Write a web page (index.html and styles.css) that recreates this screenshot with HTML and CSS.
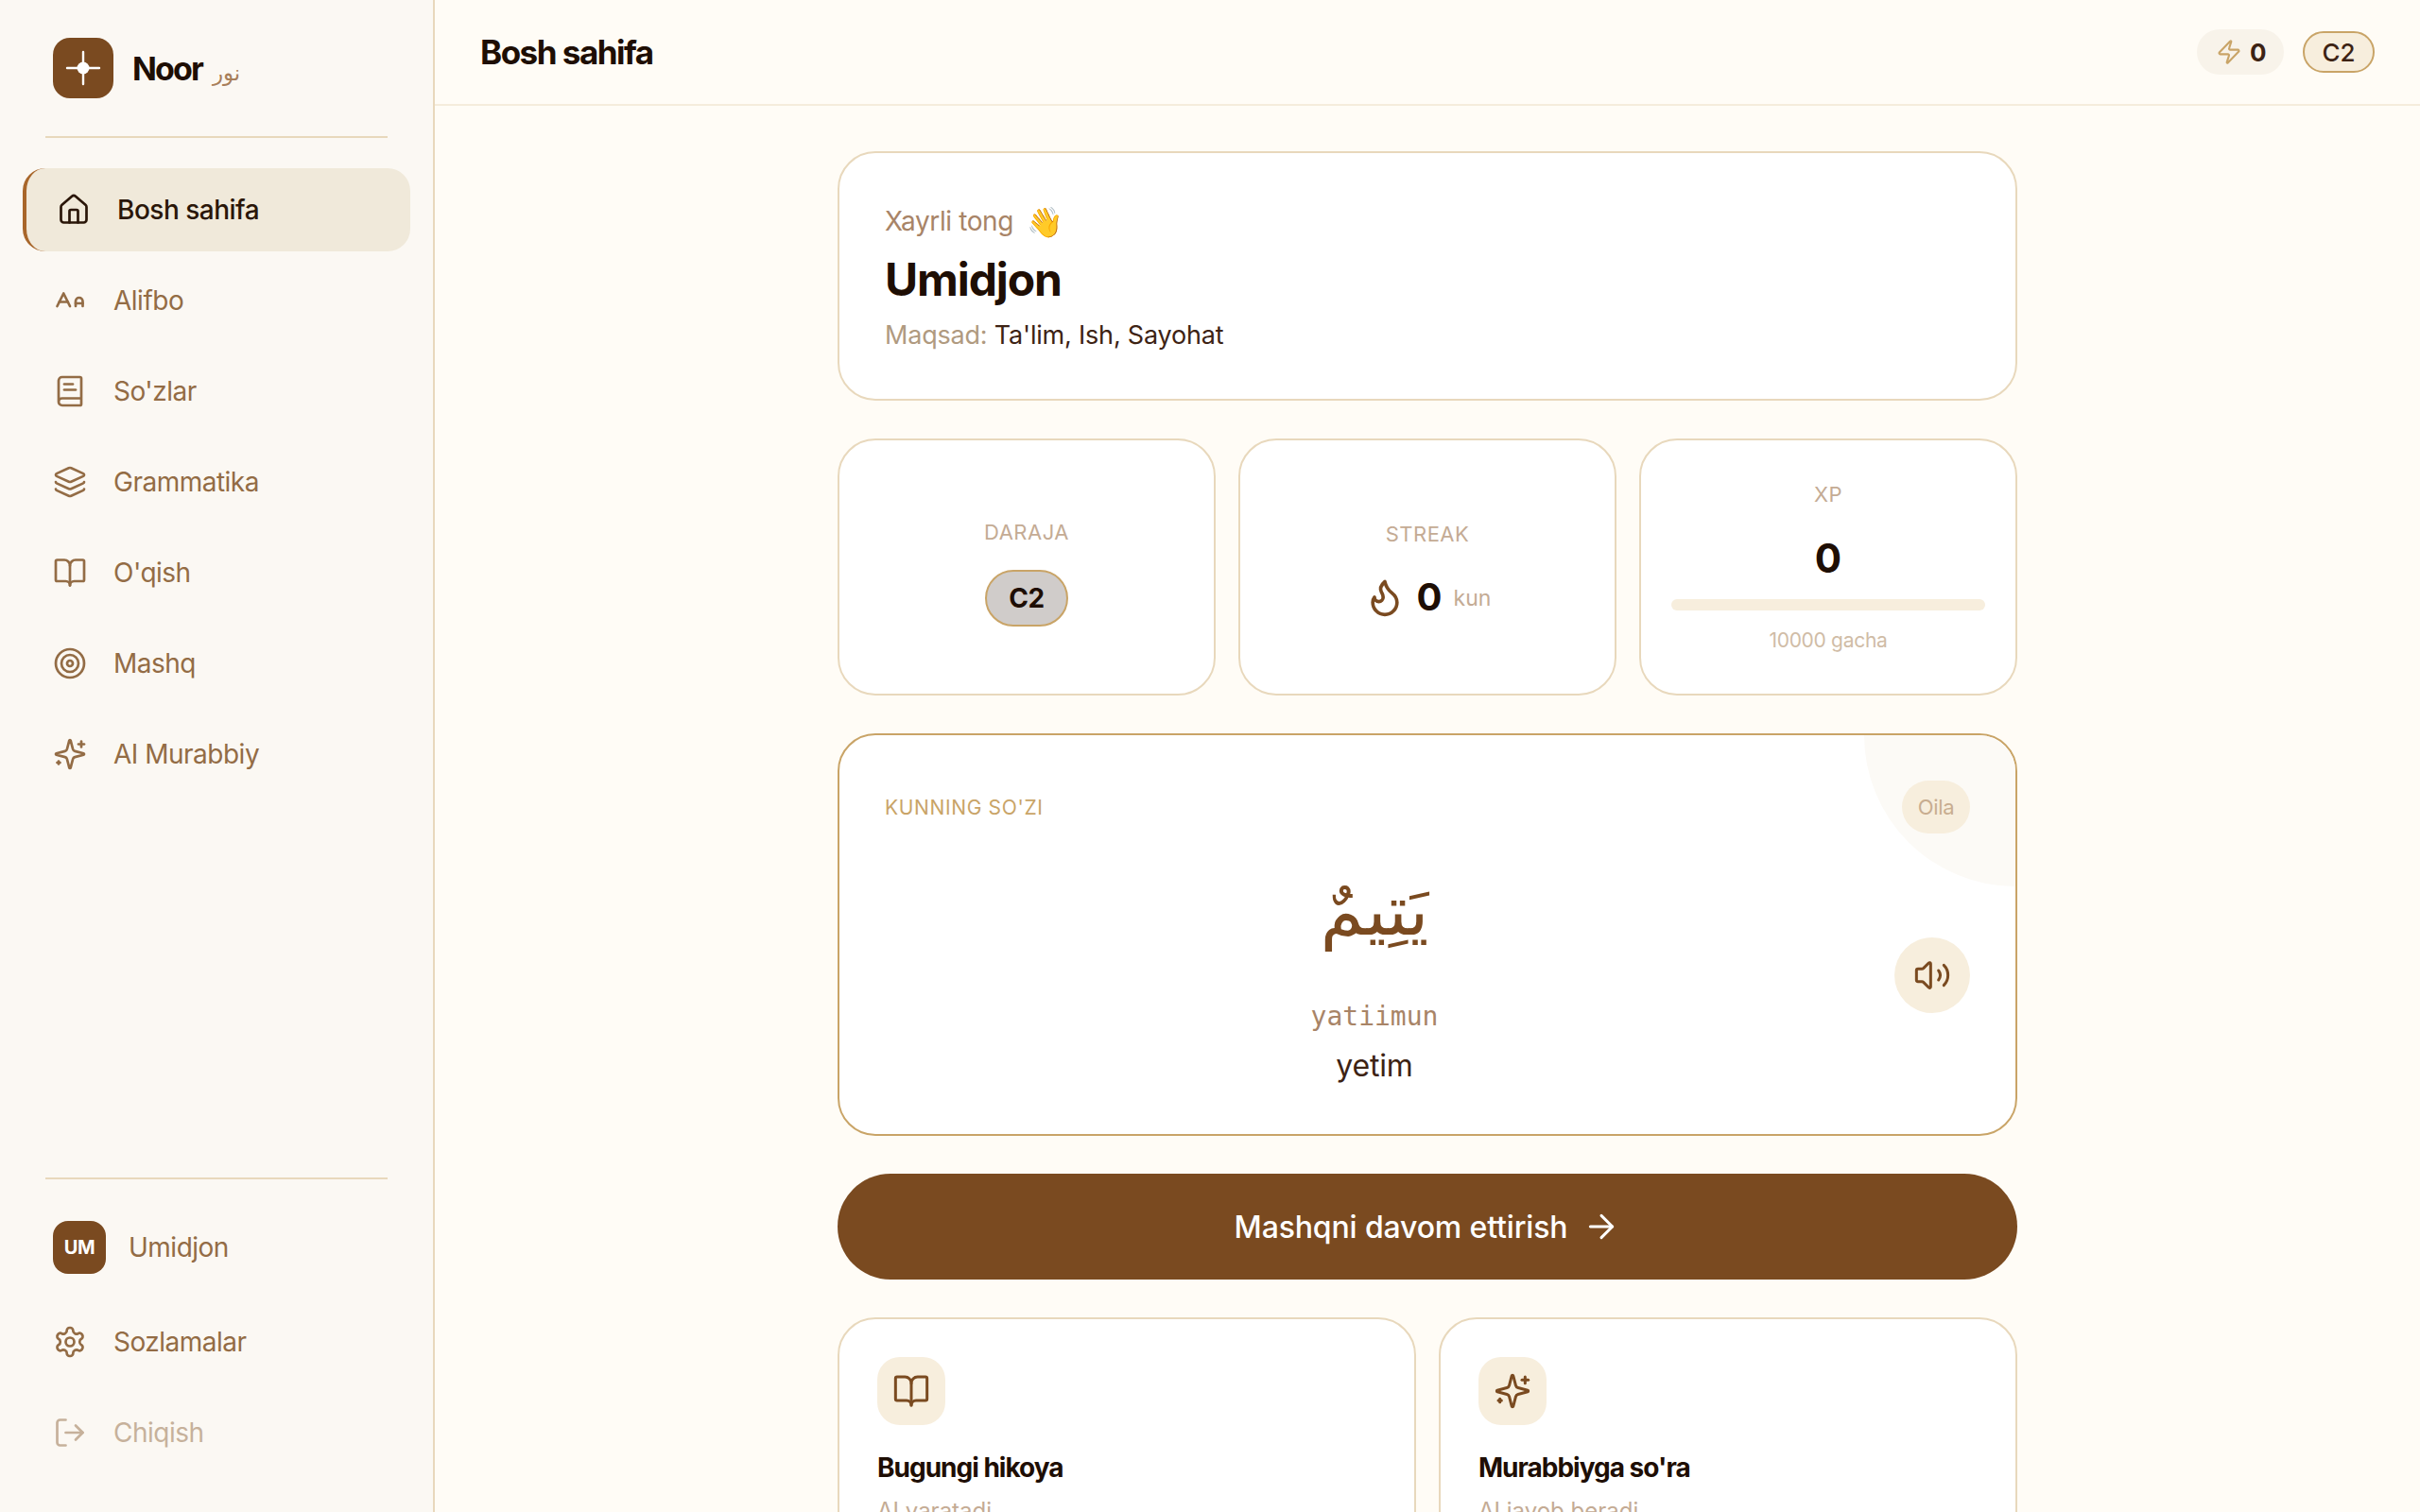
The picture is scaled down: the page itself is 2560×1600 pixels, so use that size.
FILE: index.html
```html
<!DOCTYPE html>
<html lang="uz">
<head>
    <meta charset="UTF-8">
    <meta name="viewport" content="width=device-width, initial-scale=1.0">
    <title>Noor</title>
    <link rel="stylesheet" href="styles.css">
</head>
<body>
    <div class="app">
        <aside class="sidebar">
            <div class="brand">
                <div class="brand-logo">
                    <svg viewBox="0 0 64 64" width="64" height="64" fill="none" stroke="#fff" stroke-width="2.4" stroke-linecap="round">
                        <path d="M32 15v34M15 32h34"/>
                        <circle cx="32" cy="32" r="6.5" fill="#fff" stroke="none"/>
                    </svg>
                </div>
                <span class="brand-name">Noor</span>
                <span class="brand-arabic">نور</span>
            </div>
            <div class="line"></div>
            <nav class="nav">
                <a class="nav-item active">
                    <svg class="icon" viewBox="0 0 24 24"><path d="M15 21v-8a1 1 0 0 0-1-1h-4a1 1 0 0 0-1 1v8"/><path d="M3 10a2 2 0 0 1 .709-1.528l7-5.999a2 2 0 0 1 2.582 0l7 5.999A2 2 0 0 1 21 10v9a2 2 0 0 1-2 2H5a2 2 0 0 1-2-2z"/></svg>
                    Bosh sahifa
                </a>
                <a class="nav-item">
                    <svg class="icon" viewBox="0 0 24 24"><path d="M21 14h-5"/><path d="M16 16v-3.5a2.5 2.5 0 0 1 5 0V16"/><path d="M4.5 13h6"/><path d="m3 16 4.5-9 4.5 9"/></svg>
                    Alifbo
                </a>
                <a class="nav-item">
                    <svg class="icon" viewBox="0 0 24 24"><path d="M4 19.5v-15A2.5 2.5 0 0 1 6.5 2H19a1 1 0 0 1 1 1v18a1 1 0 0 1-1 1H6.5a1 1 0 0 1 0-5H20"/><path d="M8 11h8"/><path d="M8 7h6"/></svg>
                    So'zlar
                </a>
                <a class="nav-item">
                    <svg class="icon" viewBox="0 0 24 24"><path d="M12.83 2.18a2 2 0 0 0-1.66 0L2.6 6.08a1 1 0 0 0 0 1.83l8.58 3.91a2 2 0 0 0 1.66 0l8.58-3.9a1 1 0 0 0 0-1.83z"/><path d="M2 12a1 1 0 0 0 .58.91l8.6 3.91a2 2 0 0 0 1.65 0l8.58-3.9A1 1 0 0 0 22 12"/><path d="M2 17a1 1 0 0 0 .58.91l8.6 3.91a2 2 0 0 0 1.65 0l8.58-3.9A1 1 0 0 0 22 17"/></svg>
                    Grammatika
                </a>
                <a class="nav-item">
                    <svg class="icon" viewBox="0 0 24 24"><path d="M12 7v14"/><path d="M3 18a1 1 0 0 1-1-1V4a1 1 0 0 1 1-1h5a4 4 0 0 1 4 4 4 4 0 0 1 4-4h5a1 1 0 0 1 1 1v13a1 1 0 0 1-1 1h-6a3 3 0 0 0-3 3 3 3 0 0 0-3-3z"/></svg>
                    O'qish
                </a>
                <a class="nav-item">
                    <svg class="icon" viewBox="0 0 24 24"><circle cx="12" cy="12" r="10"/><circle cx="12" cy="12" r="6"/><circle cx="12" cy="12" r="2"/></svg>
                    Mashq
                </a>
                <a class="nav-item">
                    <svg class="icon" viewBox="0 0 24 24"><path d="M9.937 15.5A2 2 0 0 0 8.5 14.063l-6.135-1.582a.5.5 0 0 1 0-.962L8.5 9.936A2 2 0 0 0 9.937 8.5l1.582-6.135a.5.5 0 0 1 .963 0L14.063 8.5A2 2 0 0 0 15.5 9.937l6.135 1.581a.5.5 0 0 1 0 .964L15.5 14.063a2 2 0 0 0-1.437 1.437l-1.582 6.135a.5.5 0 0 1-.963 0z"/><path d="M20 3v4"/><path d="M22 5h-4"/><path d="M4 17v2"/><path d="M5 18H3"/></svg>
                    AI Murabbiy
                </a>
            </nav>
            <div class="line"></div>
            <div class="sidebar-bottom">
                <a class="nav-item user">
                    <span class="avatar">UM</span>
                    Umidjon
                </a>
                <a class="nav-item">
                    <svg class="icon" viewBox="0 0 24 24"><path d="M12.22 2h-.44a2 2 0 0 0-2 2v.18a2 2 0 0 1-1 1.73l-.43.25a2 2 0 0 1-2 0l-.15-.08a2 2 0 0 0-2.73.73l-.22.38a2 2 0 0 0 .73 2.73l.15.1a2 2 0 0 1 1 1.72v.51a2 2 0 0 1-1 1.74l-.15.09a2 2 0 0 0-.73 2.73l.22.38a2 2 0 0 0 2.73.73l.15-.08a2 2 0 0 1 2 0l.43.25a2 2 0 0 1 1 1.73V20a2 2 0 0 0 2 2h.44a2 2 0 0 0 2-2v-.18a2 2 0 0 1 1-1.73l.43-.25a2 2 0 0 1 2 0l.15.08a2 2 0 0 0 2.73-.73l.22-.39a2 2 0 0 0-.73-2.73l-.15-.08a2 2 0 0 1-1-1.74v-.5a2 2 0 0 1 1-1.74l.15-.09a2 2 0 0 0 .73-2.73l-.22-.38a2 2 0 0 0-2.73-.73l-.15.08a2 2 0 0 1-2 0l-.43-.25a2 2 0 0 1-1-1.73V4a2 2 0 0 0-2-2z"/><circle cx="12" cy="12" r="3"/></svg>
                    Sozlamalar
                </a>
                <a class="nav-item logout">
                    <svg class="icon" viewBox="0 0 24 24"><path d="M9 21H5a2 2 0 0 1-2-2V5a2 2 0 0 1 2-2h4"/><path d="m16 17 5-5-5-5"/><path d="M21 12H9"/></svg>
                    Chiqish
                </a>
            </div>
        </aside>

        <main class="main">
            <header class="topbar">
                <h1>Bosh sahifa</h1>
                <div class="topbar-right">
                    <div class="xp-pill">
                        <svg class="icon bolt" viewBox="0 0 24 24"><path d="M4 14a1 1 0 0 1-.78-1.63l9.9-10.2a.5.5 0 0 1 .86.46l-1.92 6.02A1 1 0 0 0 13 10h7a1 1 0 0 1 .78 1.63l-9.9 10.2a.5.5 0 0 1-.86-.46l1.92-6.02A1 1 0 0 0 11 14z"/></svg>
                        <span>0</span>
                    </div>
                    <div class="level-pill">C2</div>
                </div>
            </header>

            <div class="content">
                <section class="card welcome">
                    <div class="greet">Xayrli tong <span class="wave">👋</span></div>
                    <div class="name">Umidjon</div>
                    <div class="goal">Maqsad: <span>Ta'lim, Ish, Sayohat</span></div>
                </section>

                <section class="stats">
                    <div class="card stat">
                        <div class="stat-label">Daraja</div>
                        <div class="stat-level">C2</div>
                    </div>
                    <div class="card stat">
                        <div class="stat-label">Streak</div>
                        <div class="streak">
                            <svg class="icon flame" viewBox="0 0 24 24"><path d="M8.5 14.5A2.5 2.5 0 0 0 11 12c0-1.38-.5-2-1-3-1.072-2.143-.224-4.054 2-6 .5 2.5 2 4.9 4 6.5 2 1.6 3 3.5 3 5.5a7 7 0 1 1-14 0c0-1.153.433-2.294 1-3a2.5 2.5 0 0 0 2.5 2.5z"/></svg>
                            <span class="stat-num">0</span>
                            <span class="streak-unit">kun</span>
                        </div>
                    </div>
                    <div class="card stat xp">
                        <div class="stat-label">XP</div>
                        <div class="stat-num">0</div>
                        <div class="bar"><div class="bar-fill" style="width: 0%"></div></div>
                        <div class="bar-note">10000 gacha</div>
                    </div>
                </section>

                <section class="card word">
                    <div class="word-corner"></div>
                    <div class="word-head">
                        <span class="word-title">Kunning so'zi</span>
                        <span class="word-tag">Oila</span>
                    </div>
                    <div class="word-body">
                        <div class="word-text">
                            <div class="arabic" lang="ar" dir="rtl">يَتِيمٌ</div>
                            <div class="translit">yatiimun</div>
                            <div class="meaning">yetim</div>
                        </div>
                        <button class="sound">
                            <svg class="icon" viewBox="0 0 24 24"><path d="M11 4.702a.705.705 0 0 0-1.203-.498L6.413 7.587A1.4 1.4 0 0 1 5.416 8H3a1 1 0 0 0-1 1v6a1 1 0 0 0 1 1h2.416a1.4 1.4 0 0 1 .997.413l3.383 3.384A.705.705 0 0 0 11 19.298z"/><path d="M16 9a5 5 0 0 1 0 6"/><path d="M19.364 18.364a9 9 0 0 0 0-12.728"/></svg>
                        </button>
                    </div>
                </section>

                <button class="continue">
                    Mashqni davom ettirish
                    <svg class="icon" viewBox="0 0 24 24"><path d="M5 12h14"/><path d="m12 5 7 7-7 7"/></svg>
                </button>

                <section class="links">
                    <div class="card link-card">
                        <div class="link-icon">
                            <svg class="icon" viewBox="0 0 24 24"><path d="M12 7v14"/><path d="M3 18a1 1 0 0 1-1-1V4a1 1 0 0 1 1-1h5a4 4 0 0 1 4 4 4 4 0 0 1 4-4h5a1 1 0 0 1 1 1v13a1 1 0 0 1-1 1h-6a3 3 0 0 0-3 3 3 3 0 0 0-3-3z"/></svg>
                        </div>
                        <div class="link-title">Bugungi hikoya</div>
                        <div class="link-sub">AI yaratadi</div>
                    </div>
                    <div class="card link-card">
                        <div class="link-icon">
                            <svg class="icon" viewBox="0 0 24 24"><path d="M9.937 15.5A2 2 0 0 0 8.5 14.063l-6.135-1.582a.5.5 0 0 1 0-.962L8.5 9.936A2 2 0 0 0 9.937 8.5l1.582-6.135a.5.5 0 0 1 .963 0L14.063 8.5A2 2 0 0 0 15.5 9.937l6.135 1.581a.5.5 0 0 1 0 .964L15.5 14.063a2 2 0 0 0-1.437 1.437l-1.582 6.135a.5.5 0 0 1-.963 0z"/><path d="M20 3v4"/><path d="M22 5h-4"/><path d="M4 17v2"/><path d="M5 18H3"/></svg>
                        </div>
                        <div class="link-title">Murabbiyga so'ra</div>
                        <div class="link-sub">AI javob beradi</div>
                    </div>
                </section>
            </div>
        </main>
    </div>
</body>
</html>
```
FILE: styles.css
```css
*{
    margin: 0;
    padding: 0;
    box-sizing: border-box;
}
html, body{
    height: 100%;
    overflow: hidden;
}
body{
    font-family: "Inter", "DejaVu Sans", sans-serif;
    background-color: #fffcf6;
    color: #3d2314;
}
.app{
    display: flex;
    height: 100vh;
}
.icon{
    width: 36px;
    height: 36px;
    flex-shrink: 0;
    fill: none;
    stroke: currentColor;
    stroke-width: 1.8;
    stroke-linecap: round;
    stroke-linejoin: round;
}

/* sidebar */
.sidebar{
    width: 460px;
    flex-shrink: 0;
    display: flex;
    flex-direction: column;
    background-color: #fbf8f3;
    border-right: 2px solid #e8d8bc;
    padding-bottom: 40px;
}
.brand{
    display: flex;
    align-items: center;
    height: 64px;
    margin: 40px 0 40px 56px;
}
.brand-logo{
    width: 64px;
    height: 64px;
    border-radius: 18px;
    background-color: #7a4a20;
}
.brand-name{
    margin-left: 20px;
    font-size: 34px;
    font-weight: 700;
    letter-spacing: -1.9px;
    color: #1e0e04;
}
.brand-arabic{
    margin-left: 11px;
    margin-top: 10px;
    font-family: "DejaVu Sans", sans-serif;
    font-size: 23px;
    color: #a87f5a;
}
.line{
    height: 2px;
    margin: 0 48px;
    background-color: #e8d8bc;
    flex-shrink: 0;
}
.nav{
    flex: 1;
    display: flex;
    flex-direction: column;
    gap: 8px;
    padding: 32px 24px 0;
}
.nav-item{
    display: flex;
    align-items: center;
    gap: 28px;
    height: 88px;
    padding-left: 32px;
    border-radius: 24px;
    font-size: 28px;
    letter-spacing: -0.5px;
    color: #936c45;
}
.nav-item.active{
    background-color: #f0e9da;
    border-left: 4px solid #a8662a;
    color: #2a1608;
    font-weight: 500;
}
.sidebar-bottom{
    display: flex;
    flex-direction: column;
    gap: 8px;
    padding: 28px 24px 0;
}
.nav-item.user{
    gap: 24px;
    margin-bottom: 4px;
}
.avatar{
    width: 56px;
    height: 56px;
    display: flex;
    align-items: center;
    justify-content: center;
    border-radius: 16px;
    background-color: #7a4a20;
    color: #fff;
    font-size: 20px;
    font-weight: 700;
    letter-spacing: -0.5px;
}
.logout{
    opacity: 0.5;
}

/* top bar */
.main{
    flex: 1;
    min-width: 0;
    display: flex;
    flex-direction: column;
}
.topbar{
    height: 112px;
    flex-shrink: 0;
    display: flex;
    align-items: center;
    justify-content: space-between;
    padding: 0 48px;
    border-bottom: 2px solid #f5ecdc;
}
.topbar h1{
    font-size: 35px;
    font-weight: 700;
    letter-spacing: -1.5px;
    color: #1e0e04;
}
.topbar-right{
    display: flex;
    align-items: center;
    gap: 20px;
}
.xp-pill{
    display: flex;
    align-items: center;
    gap: 8px;
    height: 48px;
    width: 92px;
    padding-left: 20px;
    border-radius: 24px;
    background-color: #f8f3ea;
    font-size: 26px;
    font-weight: 700;
}
.bolt{
    width: 28px;
    height: 28px;
    color: #c9a467;
}
.level-pill{
    width: 76px;
    height: 44px;
    display: flex;
    align-items: center;
    justify-content: center;
    border: 2px solid #c9a467;
    border-radius: 22px;
    background-color: #f7eedd;
    font-size: 26px;
    font-weight: 500;
}

/* content */
.content{
    flex: 1;
    width: 1248px;
    margin: 0 auto;
    padding-top: 48px;
    display: flex;
    flex-direction: column;
    gap: 40px;
}
.card{
    background-color: #fff;
    border: 2px solid #e8d8bc;
    border-radius: 40px;
}
.welcome{
    height: 264px;
    flex-shrink: 0;
    padding: 50px 48px 46px;
}
.greet{
    height: 44px;
    display: flex;
    align-items: center;
    gap: 14px;
    font-size: 28px;
    letter-spacing: -0.4px;
    color: #a88467;
}
.wave{
    font-size: 31px;
    line-height: 1;
}
.name{
    margin-top: 8px;
    line-height: 64px;
    font-size: 48px;
    font-weight: 700;
    letter-spacing: -1.1px;
    color: #1e0e04;
}
.goal{
    margin-top: 6px;
    line-height: 42px;
    font-size: 27px;
    letter-spacing: -0.2px;
    color: #b09a80;
}
.goal span{
    color: #3d2314;
}
.stats{
    display: grid;
    grid-template-columns: repeat(3, 1fr);
    gap: 24px;
    flex-shrink: 0;
}
.stat{
    height: 272px;
    padding: 42px 32px 32px;
    display: flex;
    flex-direction: column;
    align-items: center;
    justify-content: center;
}
.stat-label{
    font-size: 22px;
    line-height: 32px;
    letter-spacing: 0.5px;
    text-transform: uppercase;
    color: #c4ab94;
}
.stat-level{
    width: 88px;
    height: 60px;
    margin-top: 24px;
    display: flex;
    align-items: center;
    justify-content: center;
    border: 2px solid #c9a467;
    border-radius: 30px;
    background-color: #d0ccca;
    font-size: 28px;
    font-weight: 700;
    letter-spacing: -0.5px;
    color: #1e0e04;
}
.streak{
    display: flex;
    align-items: center;
    margin-top: 21px;
    height: 60px;
}
.flame{
    width: 44px;
    height: 44px;
    stroke-width: 2;
    color: #7a4a20;
}
.stat-num{
    font-size: 42px;
    font-weight: 700;
    line-height: 60px;
    color: #1e0e04;
}
.streak .stat-num{
    margin-left: 12px;
    font-size: 40px;
}
.streak-unit{
    margin-left: 12px;
    margin-top: 2px;
    font-size: 23px;
    color: #c4ab94;
}
.xp{
    padding: 32px;
}
.xp .stat-num{
    margin-top: 22px;
}
.bar{
    width: 100%;
    height: 12px;
    margin-top: 13px;
    border-radius: 6px;
    background-color: #f7eedd;
    overflow: hidden;
}
.bar-fill{
    height: 100%;
    background-color: #c9a467;
}
.bar-note{
    margin-top: 16px;
    font-size: 21px;
    line-height: 32px;
    letter-spacing: -0.3px;
    color: #d0bca6;
}
.word{
    position: relative;
    overflow: hidden;
    flex-shrink: 0;
    padding: 48px;
    border-color: #c9a467;
}
.word-corner{
    position: absolute;
    top: 0;
    right: 0;
    width: 160px;
    height: 160px;
    background-color: #fcfaf6;
    border-bottom-left-radius: 100%;
}
.word-head{
    position: relative;
    display: flex;
    align-items: center;
    justify-content: space-between;
    height: 56px;
}
.word-title{
    font-size: 21px;
    letter-spacing: 0.65px;
    text-transform: uppercase;
    color: #c9a467;
}
.word-tag{
    width: 72px;
    height: 56px;
    display: flex;
    align-items: center;
    justify-content: center;
    border-radius: 28px;
    background-color: #f7eedd;
    font-size: 22px;
    letter-spacing: -0.3px;
    color: #c8ad90;
}
.word-body{
    display: flex;
    align-items: center;
    gap: 32px;
    margin-top: 30px;
}
.word-text{
    flex: 1;
    text-align: center;
}
.arabic{
    height: 136px;
    line-height: 102px;
    font-family: "DejaVu Sans", sans-serif;
    font-size: 74px;
    color: #7a4a20;
}
.translit{
    height: 40px;
    line-height: 40px;
    margin-top: 8px;
    font-family: "DejaVu Sans Mono", monospace;
    font-size: 28px;
    color: #a88467;
}
.meaning{
    height: 48px;
    line-height: 48px;
    margin-top: 8px;
    font-size: 32px;
    letter-spacing: -0.2px;
    color: #3d2314;
}
.sound{
    width: 80px;
    height: 80px;
    flex-shrink: 0;
    display: flex;
    align-items: center;
    justify-content: center;
    border: none;
    border-radius: 50%;
    background-color: #f7eedd;
    color: #7a4a20;
}
.sound .icon{
    width: 40px;
    height: 40px;
}
.continue{
    height: 112px;
    flex-shrink: 0;
    display: flex;
    align-items: center;
    justify-content: center;
    gap: 16px;
    border: none;
    border-radius: 56px;
    background-color: #7a4a20;
    color: #fff;
    font-family: inherit;
    font-size: 32px;
    font-weight: 500;
    letter-spacing: -0.15px;
}
.continue .icon{
    width: 40px;
    height: 40px;
}
.links{
    display: grid;
    grid-template-columns: repeat(2, 1fr);
    gap: 24px;
    flex-shrink: 0;
}
.link-card{
    padding: 40px;
}
.link-icon{
    width: 72px;
    height: 72px;
    display: flex;
    align-items: center;
    justify-content: center;
    border-radius: 24px;
    background-color: #f7eedd;
    color: #7a4a20;
}
.link-icon .icon{
    width: 40px;
    height: 40px;
}
.link-title{
    margin-top: 25px;
    font-size: 28px;
    line-height: 40px;
    font-weight: 700;
    letter-spacing: -1px;
    color: #1e0e04;
}
.link-sub{
    margin-top: 10px;
    font-size: 24px;
    line-height: 32px;
    color: #c4ab94;
}
```
